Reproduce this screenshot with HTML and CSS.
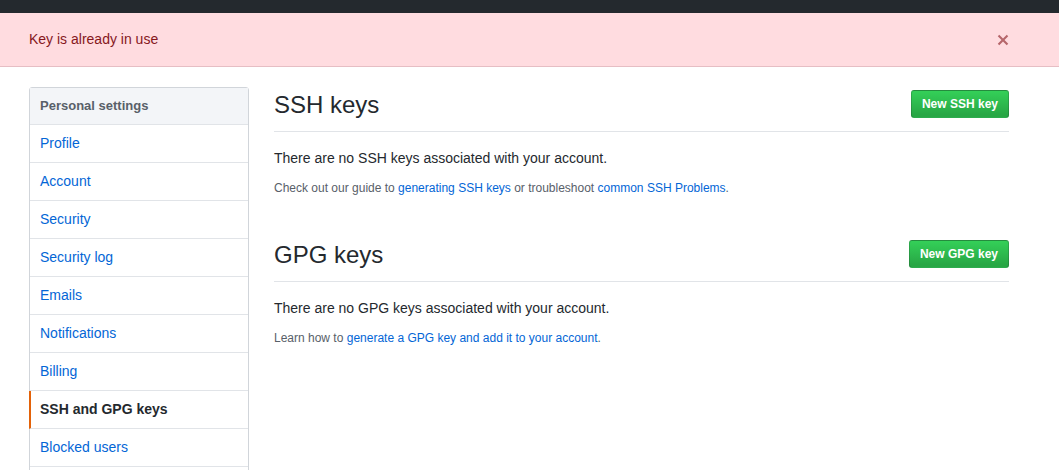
FILE: index.html
```html
<!DOCTYPE html>
<html lang="en">
<head>
<meta charset="utf-8">
<title>SSH and GPG keys</title>
<link rel="stylesheet" href="styles.css">
</head>
<body>
<div class="topbar"></div>
<div class="flash">
  <div class="container flash-inner">
    <span>Key is already in use</span>
    <svg class="flash-close" width="12" height="16" viewBox="0 0 12 16" aria-hidden="true"><path d="M7.48 8l3.75 3.75-1.48 1.48L6 9.48l-3.75 3.75-1.48-1.48L4.52 8 .77 4.25l1.48-1.48L6 6.52l3.75-3.75 1.48 1.48L7.48 8z"/></svg>
  </div>
</div>
<div class="container layout">
  <nav class="menu">
    <div class="menu-heading">Personal settings</div>
    <a class="menu-item" href="#">Profile</a>
    <a class="menu-item" href="#">Account</a>
    <a class="menu-item" href="#">Security</a>
    <a class="menu-item" href="#">Security log</a>
    <a class="menu-item" href="#">Emails</a>
    <a class="menu-item" href="#">Notifications</a>
    <a class="menu-item" href="#">Billing</a>
    <a class="menu-item selected" href="#">SSH and GPG keys</a>
    <a class="menu-item" href="#">Blocked users</a>
    <a class="menu-item" href="#">Repositories</a>
  </nav>
  <main class="content">
    <section class="section">
      <div class="subhead">
        <h2 class="subhead-heading">SSH keys</h2>
        <a class="btn" href="#">New SSH key</a>
      </div>
      <p class="blank">There are no SSH keys associated with your account.</p>
      <p class="note">Check out our guide to <a href="#">generating SSH keys</a> or troubleshoot <a href="#">common SSH Problems</a>.</p>
    </section>
    <section class="section">
      <div class="subhead">
        <h2 class="subhead-heading">GPG keys</h2>
        <a class="btn" href="#">New GPG key</a>
      </div>
      <p class="blank">There are no GPG keys associated with your account.</p>
      <p class="note">Learn how to <a href="#">generate a GPG key and add it to your account</a>.</p>
    </section>
  </main>
</div>
</body>
</html>
```

FILE: styles.css
```css
* { box-sizing: border-box; }

body {
  margin: 0;
  font-family: "Liberation Sans", Arial, sans-serif;
  font-size: 14px;
  line-height: 1.5;
  color: #24292e;
  background: #fff;
}

a { color: #0366d6; text-decoration: none; }

.topbar {
  height: 13px;
  background: #24292e;
}

.container {
  width: 980px;
  margin-left: 29px;
}

.flash {
  background: #ffdce0;
  color: #86181d;
  border-bottom: 1px solid #e6bec4;
  padding: 16px 0;
}

.flash-inner {
  display: flex;
  align-items: center;
  justify-content: space-between;
  line-height: 21px;
}

.flash-close {
  fill: #86181d;
  opacity: 0.6;
}

.layout {
  display: flex;
  gap: 25px;
  margin-top: 20px;
  align-items: flex-start;
}

.menu {
  width: 220px;
  flex: none;
  border: 1px solid #d1d5da;
  border-radius: 3px;
  display: flex;
  flex-direction: column;
}

.menu-heading {
  padding: 8px 10px;
  font-size: 13px;
  font-weight: bold;
  color: #586069;
  background: #f3f5f8;
  border-bottom: 1px solid #e1e4e8;
  line-height: 20px;
}

.menu-item {
  padding: 8px 10px;
  border-bottom: 1px solid #e1e4e8;
  line-height: 21px;
}

.menu-item.selected {
  font-weight: bold;
  color: #24292e;
  border-left: 2px solid #e36209;
  padding-left: 9px;
  margin-left: -1px;
}

.content {
  flex: 1;
}

.section + .section {
  margin-top: 40px;
}

.subhead {
  display: flex;
  align-items: center;
  justify-content: space-between;
  padding-bottom: 8px;
  border-bottom: 1px solid #e1e4e8;
  margin-bottom: 16px;
}

.subhead-heading {
  margin: 0;
  font-size: 24px;
  font-weight: normal;
  line-height: 36px;
}

.btn {
  display: inline-block;
  padding: 3px 10px;
  font-size: 12px;
  font-weight: bold;
  line-height: 20px;
  color: #fff;
  background-color: #28a745;
  background-image: linear-gradient(-180deg, #34d058 0%, #28a745 90%);
  border: 1px solid rgba(27, 31, 35, 0.2);
  border-radius: 3px;
  margin-top: -2px;
}

.blank {
  margin: 0 0 10px;
  line-height: 21px;
}

.note {
  margin: 0;
  font-size: 12px;
  line-height: 18px;
  color: #586069;
}
```
